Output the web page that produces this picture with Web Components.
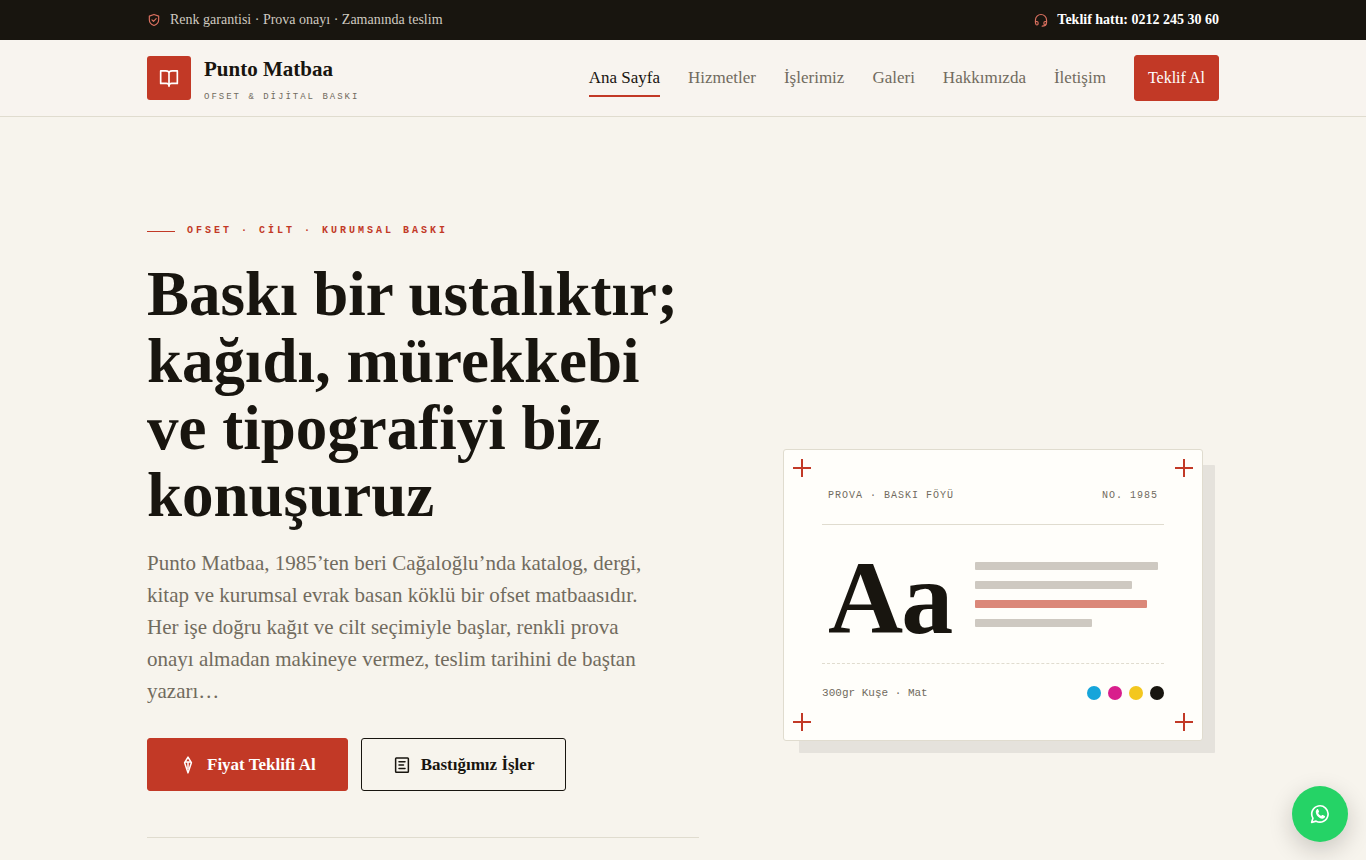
<!DOCTYPE html>
<html lang="tr">
<head>
<meta charset="UTF-8">
<meta name="viewport" content="width=device-width, initial-scale=1">
<title>Punto Matbaa</title>
<style>
  :root {
    --paper: #f7f4ed;
    --paper-head: #f8f4ef;
    --card: #fffefa;
    --ink: #18150f;
    --muted: #716b5e;
    --line: #e0dccf;
    --red: #c23926;
    --radius: 3px;
    --serif: 'Palatino Linotype', 'Liberation Serif', serif;
    --mono: Consolas, 'Liberation Mono', monospace;
  }
  body {
    margin: 0;
    background: var(--paper);
    color: var(--ink);
    font-family: var(--serif);
  }
</style>
</head>
<body>
  <site-topbar>
    <span slot="note">Renk garantisi · Prova onayı · Zamanında teslim</span>
    <span slot="phone">Teklif hattı: 0212 245 30 60</span>
  </site-topbar>

  <site-header>
    <span slot="name">Punto Matbaa</span>
    <span slot="tagline">OFSET &amp; DİJİTAL BASKI</span>
    <nav-link active>Ana Sayfa</nav-link>
    <nav-link>Hizmetler</nav-link>
    <nav-link>İşlerimiz</nav-link>
    <nav-link>Galeri</nav-link>
    <nav-link>Hakkımızda</nav-link>
    <nav-link>İletişim</nav-link>
    <action-link slot="cta" size="small">Teklif Al</action-link>
  </site-header>

  <main>
    <page-hero>
      <span slot="eyebrow">OFSET · CİLT · KURUMSAL BASKI</span>
      <span slot="title">Baskı bir ustalıktır; kağıdı, mürekkebi ve tipografiyi biz konuşuruz</span>
      <span slot="lead">Punto Matbaa, 1985’ten beri Cağaloğlu’nda katalog, dergi, kitap ve kurumsal evrak basan köklü bir ofset matbaasıdır. Her işe doğru kağıt ve cilt seçimiyle başlar, renkli prova onayı almadan makineye vermez, teslim tarihini de baştan yazarı…</span>
      <action-link slot="actions" icon="pen">Fiyat Teklifi Al</action-link>
      <action-link slot="actions" icon="list" variant="outline">Bastığımız İşler</action-link>
      <proof-card slot="visual">
        <span slot="label">PROVA · BASKI FÖYÜ</span>
        <span slot="number">NO. 1985</span>
        <span slot="sample">Aa</span>
        <span slot="stock">300gr Kuşe · Mat</span>
      </proof-card>
    </page-hero>
  </main>

  <whatsapp-button></whatsapp-button>

<script>
  const ICONS = {
    shield: '<path d="M12 2.500 20 5.300v6.200c0 5-3.400 8.300-8 10-4.600-1.700-8-5-8-10V5.300z"/><path d="m8.500 11.800 2.600 2.600 4.600-4.800"/>',
    headset: '<path d="M2.500 17v-5a9.500 9.500 0 0 1 19 0v5"/><path d="M2.500 14.500H5a2 2 0 0 1 2 2v2a2 2 0 0 1-4 0z"/><path d="M21.500 14.500H19a2 2 0 0 0-2 2v2a2 2 0 0 0 4 0z"/><path d="M20.500 19c0 2.500-2 3.500-6.500 3.500"/>',
    book: '<path d="M12 5C11 4 9.500 3.500 8 3.500H2v15h7c1.500 0 2.500.8 3 2 .5-1.200 1.500-2 3-2h7v-15h-6c-1.500 0-3 .5-4 1.500z"/><path d="M12 5v17"/>',
    pen: '<path d="M12 1.500 7.500 9 12 22.500 16.500 9z"/><path d="M9 8h6M12 8v9"/>',
    list: '<rect x="3.500" y="2.500" width="17" height="19" rx="1"/><path d="M8 7.500h8M8 12h6M8 16.500h8"/>',
    whatsapp: '<path d="M2 22 3.500 17a9.800 9.800 0 1 1 3.800 3.600z"/><path fill="currentColor" stroke="none" d="M8.300 6.300c.4-.4 1.100-.4 1.400.1l1.100 2.400c.1.300.1.600-.1.900l-.9 1.100c.8 1.600 1.900 2.700 3.500 3.500l1.100-1c.3-.2.700-.3 1-.1l2.300 1.100c.5.300.5 1 .2 1.600-.7 1.200-1.900 1.900-3.300 1.700-3.900-.5-7.100-4-7.600-7.500-.2-1.500.3-2.900 1.300-3.800z"/>'
  };

  class UiIcon extends HTMLElement {
    constructor() {
      super();
      const width = this.getAttribute('stroke') || '2';
      this.attachShadow({ mode: 'open' }).innerHTML = `
        <style>
          :host { display: block; flex: none; width: 16px; height: 16px; }
          svg { display: block; width: 100%; height: 100%; }
        </style>
        <svg viewBox="0 0 24 24" fill="none" stroke="currentColor" stroke-width="${width}"
          stroke-linecap="round" stroke-linejoin="round" aria-hidden="true">${ICONS[this.getAttribute('name')]}</svg>
      `;
    }
  }

  class SiteTopbar extends HTMLElement {
    constructor() {
      super();
      this.attachShadow({ mode: 'open' }).innerHTML = `
        <style>
          :host { display: block; background: var(--ink); color: #cfcac0; }
          .bar {
            max-width: 1072px;
            margin: 0 auto;
            padding: 10px 24px;
            display: flex;
            justify-content: space-between;
            font-size: 14px;
            line-height: 20px;
          }
          .item { display: flex; align-items: center; gap: 9px; }
          ui-icon { width: 14px; height: 14px; color: #d9705f; }
          a { color: #fff; font-weight: 700; text-decoration: none; }
        </style>
        <div class="bar">
          <div class="item"><ui-icon name="shield"></ui-icon><slot name="note"></slot></div>
          <a class="item" href="tel:02122453060"><ui-icon name="headset"></ui-icon><slot name="phone"></slot></a>
        </div>
      `;
    }
  }

  class SiteHeader extends HTMLElement {
    constructor() {
      super();
      this.attachShadow({ mode: 'open' }).innerHTML = `
        <style>
          :host { display: block; background: var(--paper-head); border-bottom: 1px solid var(--line); }
          header {
            max-width: 1072px;
            margin: 0 auto;
            padding: 14px 24px;
            display: flex;
            align-items: center;
            justify-content: space-between;
          }
          .brand { display: flex; align-items: center; gap: 13px; color: var(--ink); text-decoration: none; }
          .mark {
            width: 44px;
            height: 44px;
            display: grid;
            place-items: center;
            background: var(--red);
            color: #fff;
            border-radius: var(--radius);
          }
          .mark ui-icon { width: 20px; height: 20px; }
          .words { display: flex; flex-direction: column; gap: 8px; }
          .name { font-size: 21px; font-weight: 700; line-height: 30px; }
          .tagline { font-family: var(--mono); font-size: 9px; line-height: 10px; letter-spacing: 2px; color: var(--muted); }
          nav { display: flex; align-items: center; gap: 28px; }
        </style>
        <header>
          <a class="brand" href="#">
            <span class="mark"><ui-icon name="book"></ui-icon></span>
            <span class="words">
              <span class="name"><slot name="name"></slot></span>
              <span class="tagline"><slot name="tagline"></slot></span>
            </span>
          </a>
          <nav><slot></slot><slot name="cta"></slot></nav>
        </header>
      `;
    }
  }

  class NavLink extends HTMLElement {
    constructor() {
      super();
      this.attachShadow({ mode: 'open' }).innerHTML = `
        <style>
          :host { display: block; }
          a {
            display: block;
            padding: 7px 0;
            border-top: 2px solid transparent;
            border-bottom: 2px solid transparent;
            color: var(--muted);
            font-size: 17px;
            line-height: 20px;
            text-decoration: none;
            white-space: nowrap;
          }
          :host([active]) a { color: var(--ink); border-bottom-color: var(--red); }
        </style>
        <a href="#"><slot></slot></a>
      `;
    }
  }

  class ActionLink extends HTMLElement {
    constructor() {
      super();
      const icon = this.getAttribute('icon');
      this.attachShadow({ mode: 'open' }).innerHTML = `
        <style>
          :host { display: block; }
          a {
            display: flex;
            align-items: center;
            gap: 10px;
            padding: 15px 31px;
            border: 1px solid var(--red);
            border-radius: var(--radius);
            background: var(--red);
            color: #fff;
            font-size: 17px;
            font-weight: 700;
            line-height: 21px;
            text-decoration: none;
            white-space: nowrap;
          }
          ui-icon { width: 18px; height: 18px; }
          :host([variant="outline"]) a { background: none; border-color: var(--ink); color: var(--ink); }
          :host([size="small"]) a { padding: 12px 13px; font-size: 16px; font-weight: 400; line-height: 20px; }
        </style>
        <a href="#">${icon ? `<ui-icon name="${icon}"></ui-icon>` : ''}<slot></slot></a>
      `;
    }
  }

  class PageHero extends HTMLElement {
    constructor() {
      super();
      this.attachShadow({ mode: 'open' }).innerHTML = `
        <style>
          :host { display: block; }
          section {
            max-width: 1072px;
            margin: 0 auto;
            padding: 106px 24px;
            display: grid;
            grid-template-columns: 11fr 9fr;
            gap: 68px;
            align-items: center;
          }
          .eyebrow {
            display: flex;
            align-items: center;
            gap: 12px;
            margin: 0 0 22px;
            color: var(--red);
            font-family: var(--mono);
            font-size: 10px;
            font-weight: 700;
            line-height: 16px;
            letter-spacing: 3px;
          }
          .eyebrow::before { content: ''; width: 28px; height: 1px; background: var(--red); }
          h1 { margin: 0; font-size: 63px; font-weight: 700; line-height: 67px; }
          .lead { max-width: 520px; margin: 18px 0 31px; color: var(--muted); font-size: 21px; line-height: 32px; }
          .actions { display: flex; flex-wrap: wrap; gap: 13px; }
          .foot { margin-top: 46px; padding-bottom: 129px; border-top: 1px solid var(--line); }
          .visual { display: flex; justify-content: center; }
        </style>
        <section>
          <div>
            <p class="eyebrow"><slot name="eyebrow"></slot></p>
            <h1><slot name="title"></slot></h1>
            <p class="lead"><slot name="lead"></slot></p>
            <div class="actions"><slot name="actions"></slot></div>
            <div class="foot"></div>
          </div>
          <div class="visual"><slot name="visual"></slot></div>
        </section>
      `;
    }
  }

  class ProofCard extends HTMLElement {
    constructor() {
      super();
      this.attachShadow({ mode: 'open' }).innerHTML = `
        <style>
          :host { display: block; position: relative; flex: 0 1 420px; font-family: var(--mono); color: var(--muted); }
          .shadow { position: absolute; inset: 16px -12px -12px 16px; background: #e5e2dc; border-radius: 1px; }
          .sheet {
            position: relative;
            padding: 38px;
            background: var(--card);
            border: 1px solid var(--line);
            border-radius: var(--radius);
          }
          /* register marks */
          .mark {
            position: absolute;
            width: 18px;
            height: 18px;
            background:
              linear-gradient(var(--red), var(--red)) center / 18px 2px no-repeat,
              linear-gradient(var(--red), var(--red)) center / 2px 18px no-repeat;
          }
          .tl { top: 9px; left: 9px; }
          .tr { top: 9px; right: 9px; }
          .bl { bottom: 9px; left: 9px; }
          .br { bottom: 9px; right: 9px; }
          .head {
            display: flex;
            justify-content: space-between;
            padding: 0 6px 20px;
            border-bottom: 1px solid var(--line);
            font-size: 10px;
            line-height: 16px;
            letter-spacing: 1px;
          }
          .body { display: flex; align-items: center; gap: 24px; padding: 13px 6px; }
          .sample {
            padding-top: 8px;
            color: var(--ink);
            font-family: var(--serif);
            font-size: 104px;
            font-weight: 700;
            line-height: 104px;
            letter-spacing: -2px;
          }
          .lines { flex: 1; display: grid; gap: 11px; }
          .lines i { height: 8px; background: #cec9c1; border-radius: 1px; }
          .lines i:nth-child(2) { width: 86%; }
          .lines i:nth-child(3) { width: 94%; background: #db8879; }
          .lines i:nth-child(4) { width: 64%; }
          .foot {
            display: flex;
            align-items: center;
            justify-content: space-between;
            padding-top: 20px;
            border-top: 1px dashed var(--line);
            font-size: 11px;
            line-height: 18px;
          }
          .inks { display: flex; gap: 7px; }
          .inks i { width: 14px; height: 14px; border-radius: 50%; }
          .cyan { background: #16a5da; }
          .magenta { background: #d81e8c; }
          .yellow { background: #f3c71e; }
          .black { background: var(--ink); }
        </style>
        <div class="shadow"></div>
        <div class="sheet">
          <span class="mark tl"></span><span class="mark tr"></span>
          <span class="mark bl"></span><span class="mark br"></span>
          <div class="head"><slot name="label"></slot><slot name="number"></slot></div>
          <div class="body">
            <div class="sample"><slot name="sample"></slot></div>
            <div class="lines"><i></i><i></i><i></i><i></i></div>
          </div>
          <div class="foot">
            <slot name="stock"></slot>
            <div class="inks"><i class="cyan"></i><i class="magenta"></i><i class="yellow"></i><i class="black"></i></div>
          </div>
        </div>
      `;
    }
  }

  class WhatsappButton extends HTMLElement {
    constructor() {
      super();
      this.attachShadow({ mode: 'open' }).innerHTML = `
        <style>
          :host { display: block; position: fixed; right: 18px; bottom: 18px; }
          a {
            display: grid;
            place-items: center;
            width: 56px;
            height: 56px;
            border-radius: 50%;
            background: #25d366;
            color: #fff;
            box-shadow: 0 8px 24px rgba(24, 21, 15, 0.2);
          }
          ui-icon { width: 20px; height: 20px; }
        </style>
        <a href="#" aria-label="WhatsApp"><ui-icon name="whatsapp"></ui-icon></a>
      `;
    }
  }

  customElements.define('ui-icon', UiIcon);
  customElements.define('site-topbar', SiteTopbar);
  customElements.define('site-header', SiteHeader);
  customElements.define('nav-link', NavLink);
  customElements.define('action-link', ActionLink);
  customElements.define('page-hero', PageHero);
  customElements.define('proof-card', ProofCard);
  customElements.define('whatsapp-button', WhatsappButton);
</script>
</body>
</html>
